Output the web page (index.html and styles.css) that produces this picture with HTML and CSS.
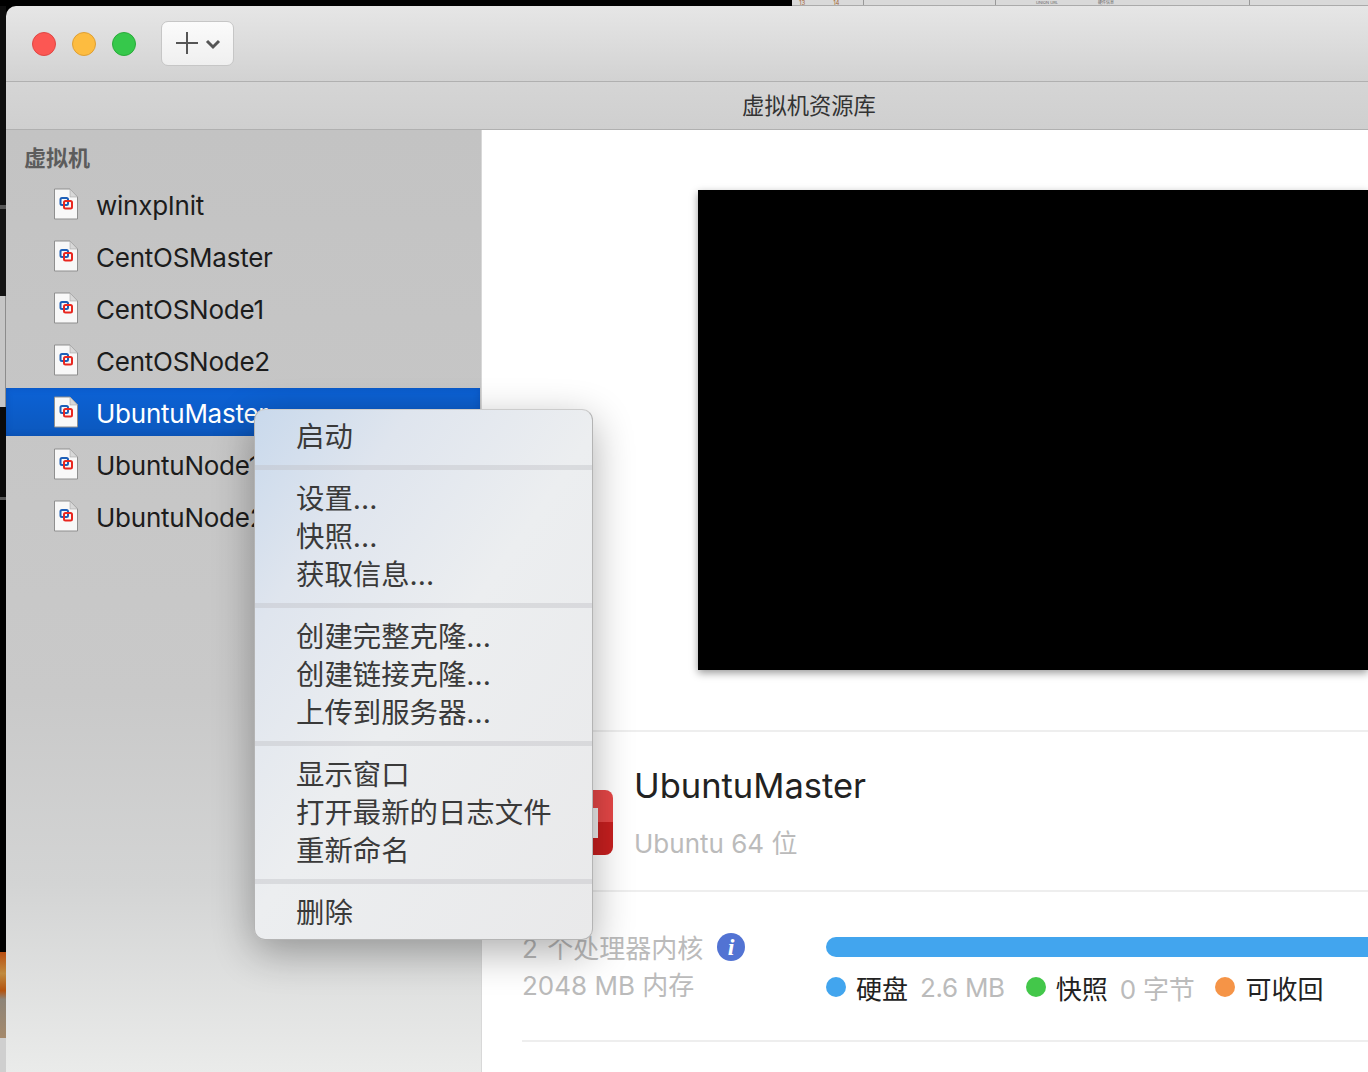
FILE: index.html
```html
<!DOCTYPE html>
<html lang="zh-CN">
<head>
    <meta charset="UTF-8">
    <title>虚拟机资源库</title>
    <link rel="stylesheet" href="styles.css">
</head>
<body>
    <div class="desktop-top">
        <div class="sheet">
            <span class="sheet-cell sheet-nums"><span>13</span><span>14</span></span>
            <span class="sheet-cell sheet-b"></span>
            <span class="sheet-cell sheet-c"><span class="sheet-label">UNION URL</span><span class="sheet-label">硬件信息</span></span>
            <span class="sheet-cell sheet-d"></span>
        </div>
    </div>
    <div class="desktop">
        <div class="desktop-left">
            <div class="strip strip-a"></div>
            <div class="strip strip-bar"></div>
            <div class="strip strip-b"></div>
            <div class="strip strip-light"></div>
            <div class="strip strip-c"></div>
            <div class="strip strip-bar-thin"></div>
            <div class="strip strip-d"></div>
            <div class="strip strip-photo"></div>
            <div class="strip strip-e"></div>
        </div>
        <div class="window">
            <header class="toolbar">
                <span class="light light-red"></span>
                <span class="light light-yellow"></span>
                <span class="light light-green"></span>
                <button class="add-btn">
                    <svg width="56" height="26" viewBox="0 0 56 26">
                        <path d="M13 1v22M2 12h22" fill="none" stroke="#555" stroke-width="2"/>
                        <path d="M33 10l6 6 6-6" fill="none" stroke="#555" stroke-width="3"/>
                    </svg>
                </button>
            </header>
            <div class="titlebar">虚拟机资源库</div>
            <div class="content">
                <aside class="sidebar">
                    <div class="side-title">虚拟机</div>
                    <ul class="vm-list">
                        <li class="vm"><svg class="doc" viewBox="0 0 26 32"><use href="#doc-icon"/></svg>winxpInit</li>
                        <li class="vm"><svg class="doc" viewBox="0 0 26 32"><use href="#doc-icon"/></svg>CentOSMaster</li>
                        <li class="vm"><svg class="doc" viewBox="0 0 26 32"><use href="#doc-icon"/></svg>CentOSNode1</li>
                        <li class="vm"><svg class="doc" viewBox="0 0 26 32"><use href="#doc-icon"/></svg>CentOSNode2</li>
                        <li class="vm vm-selected"><svg class="doc" viewBox="0 0 26 32"><use href="#doc-icon"/></svg>UbuntuMaster</li>
                        <li class="vm"><svg class="doc" viewBox="0 0 26 32"><use href="#doc-icon"/></svg>UbuntuNode1</li>
                        <li class="vm"><svg class="doc" viewBox="0 0 26 32"><use href="#doc-icon"/></svg>UbuntuNode2</li>
                    </ul>
                </aside>
                <main class="detail">
                    <div class="preview"><div class="screen"></div></div>
                    <section class="info">
                        <div class="os-icon"><span class="os-window"></span></div>
                        <div>
                            <div class="vm-name">UbuntuMaster</div>
                            <div class="vm-os">Ubuntu 64 位</div>
                        </div>
                    </section>
                    <section class="stats">
                        <div class="specs">
                            <div class="spec-line spec-cores">2 个处理器内核 <span class="info-dot">i</span></div>
                            <div class="spec-line">2048 MB 内存</div>
                        </div>
                        <div class="usage">
                            <div class="bar"></div>
                            <div class="legend">
                                <span class="dot dot-blue"></span><span class="key">硬盘</span><span class="val">2.6 MB</span>
                                <span class="dot dot-green"></span><span class="key">快照</span><span class="val">0 字节</span>
                                <span class="dot dot-orange"></span><span class="key">可收回</span>
                            </div>
                        </div>
                    </section>
                </main>
            </div>
        </div>
    </div>

    <div class="menu">
        <div class="menu-group"><div class="menu-item">启动</div></div>
        <div class="menu-group">
            <div class="menu-item">设置...</div>
            <div class="menu-item">快照...</div>
            <div class="menu-item">获取信息...</div>
        </div>
        <div class="menu-group">
            <div class="menu-item">创建完整克隆...</div>
            <div class="menu-item">创建链接克隆...</div>
            <div class="menu-item">上传到服务器...</div>
        </div>
        <div class="menu-group">
            <div class="menu-item">显示窗口</div>
            <div class="menu-item">打开最新的日志文件</div>
            <div class="menu-item">重新命名</div>
        </div>
        <div class="menu-group"><div class="menu-item">删除</div></div>
    </div>

    <svg class="defs" width="0" height="0">
        <symbol id="doc-icon" viewBox="0 0 26 32">
            <path d="M1.500 1h15.500l7.500 8v22h-23z" fill="#f8f8f8" stroke="#8f8f8f"/>
            <path d="M17 1v8h7.500z" fill="#d8d8d8" stroke="#aaa" stroke-width=".6"/>
            <rect x="7.500" y="10" width="7.500" height="7" rx="1.500" fill="none" stroke="#1d5fb8" stroke-width="2"/>
            <rect x="11" y="13" width="8" height="7.500" rx="1.500" fill="none" stroke="#e8261f" stroke-width="2"/>
        </symbol>
    </svg>
</body>
</html>
```

FILE: styles.css
```css
* {
    box-sizing: border-box;
}

html, body {
    margin: 0;
    height: 1072px;
    overflow: hidden;
}

body {
    position: relative;
    background-color: #000;
    font-family: Inter, "Noto Sans CJK SC", sans-serif;
    color: #222;
}

.defs {
    position: absolute;
}

/* bits of the desktop showing around the window */
.desktop-top {
    height: 6px;
    display: flex;
    justify-content: flex-end;
}

.sheet {
    width: 576px;
    display: flex;
    background-color: #d9d9d9;
    border-bottom: 1px solid #aaa;
}

.sheet-cell {
    display: flex;
    border-right: 1px solid #999;
}

.sheet-nums {
    width: 72px;
    gap: 28px;
    padding-left: 7px;
    font-size: 6px;
    line-height: 5px;
    color: #a5683a;
}

.sheet-b { width: 132px; }
.sheet-c { width: 254px; }
.sheet-d { flex: 1; border-right: none; }

.sheet-label {
    font-size: 4px;
    line-height: 5px;
    color: #666;
    margin-left: 40px;
    white-space: nowrap;
}

.desktop {
    display: flex;
    height: 1066px;
}

.desktop-left {
    width: 6px;
    flex-shrink: 0;
    display: flex;
    flex-direction: column;
}

.strip-a { height: 199px; background-color: #0e0e0e; }
.strip-bar { height: 4px; background-color: #555; }
.strip-b { height: 87px; background-color: #141414; }
.strip-light { height: 111px; background-color: #c6c6c6; border-right: 1px solid #8c8c8c; }
.strip-c { height: 90px; background-color: #0a0a0a; }
.strip-bar-thin { height: 3px; background-color: #555; }
.strip-d { height: 452px; background-color: #000; }
.strip-photo {
    height: 86px;
    background: linear-gradient(#b84e12 0, #c08a3e 25%, #b3530f 45%, #8d8478 55%, #a58a6c 100%);
}
.strip-e { height: 34px; background-color: #cfcfcf; }

.window {
    flex: 1;
    min-width: 0;
    border-top-left-radius: 10px;
    overflow: hidden;
    display: flex;
    flex-direction: column;
}

.toolbar {
    height: 76px;
    flex-shrink: 0;
    display: flex;
    align-items: center;
    padding: 0 0 0 26px;
    gap: 16px;
    background: linear-gradient(#e6e6e6, #d2d2d2);
    border-bottom: 1px solid #b0b0b0;
}

.light {
    width: 24px;
    height: 24px;
    border-radius: 50%;
}

.light-red { background-color: #fc5753; border: 1px solid #df4744; }
.light-yellow { background-color: #fdbc40; border: 1px solid #de9f34; }
.light-green { background-color: #36c84b; border: 1px solid #2aab3a; }

.add-btn {
    width: 73px;
    height: 45px;
    margin-left: 9px;
    padding: 0 0 0 12px;
    display: flex;
    align-items: center;
    background: linear-gradient(#fbfbfb, #efefef);
    border: 1px solid #c6c6c6;
    border-radius: 7px;
}

.titlebar {
    height: 48px;
    flex-shrink: 0;
    display: flex;
    align-items: center;
    justify-content: center;
    padding: 0 0 4px 244px;
    font-size: 22.300px;
    color: #333;
    background: linear-gradient(#d5d5d5, #cfcfcf);
    border-bottom: 1px solid #b0b0b0;
}

.content {
    flex: 1;
    display: flex;
    min-height: 0;
}

.sidebar {
    width: 476px;
    flex-shrink: 0;
    border-right: 1px solid #d8d8d8;
    background: linear-gradient(#c3c3c3 0, #c9c9c9 60%, #d3d4d4 80%, #eaebea 100%);
}

.side-title {
    padding: 15px 0 0 18px;
    height: 50px;
    font-size: 22px;
    line-height: 26px;
    font-weight: 700;
    color: #5c5c5c;
}

.vm-list {
    list-style: none;
    margin: 0;
    padding: 0;
}

.vm {
    height: 52px;
    display: flex;
    align-items: center;
    padding: 0 0 2px 47px;
    font-size: 26px;
    letter-spacing: -0.25px;
    color: #1c1c1c;
}

.vm-selected {
    height: 48px;
    margin: 0 1px 4px 0;
    padding: 2px 0 0 47px;
    color: #fff;
    background: linear-gradient(#0c62d6, #0c58bd);
    box-shadow: inset 0 0 6px rgba(0, 40, 120, 0.25);
}

.doc {
    width: 26px;
    height: 32px;
    margin-right: 17px;
    margin-top: -2px;
}

.detail {
    flex: 1;
    min-width: 0;
    background-color: #fff;
}

.preview {
    height: 602px;
    padding: 60px 0 0 216px;
    border-bottom: 2px solid #eee;
}

.screen {
    height: 480px;
    background-color: #000;
    box-shadow: 0 3px 8px rgba(0, 0, 0, 0.4);
}

.info {
    height: 160px;
    margin-left: 40px;
    display: flex;
    padding-top: 32px;
    border-bottom: 2px solid #eee;
}

.os-icon {
    width: 65px;
    height: 65px;
    margin: 26px 22px 0 26px;
    flex-shrink: 0;
    border-radius: 8px;
    background: linear-gradient(#e64747 50%, #c71f1f 50%);
    display: flex;
    align-items: center;
    justify-content: center;
}

.os-window {
    width: 34px;
    height: 30px;
    background-color: #eee;
}

.vm-name {
    font-size: 34.500px;
    line-height: 44px;
    margin-left: -1px;
    color: #222;
}

.vm-os {
    margin: 20px 0 0 -1px;
    font-size: 26px;
    line-height: 32px;
    color: #bbb;
}

.stats {
    height: 150px;
    margin-left: 40px;
    padding-top: 36px;
    display: flex;
    border-bottom: 2px solid #eee;
}

.specs {
    width: 304px;
    flex-shrink: 0;
}

.spec-line {
    display: flex;
    align-items: center;
    gap: 14px;
    height: 37px;
    font-size: 26px;
    color: #bbb;
}

.spec-cores {
    word-spacing: 2px;
}

.info-dot {
    width: 28px;
    height: 28px;
    border-radius: 50%;
    background-color: #5273d3;
    color: #fff;
    text-align: center;
    font-family: "Liberation Serif", serif;
    font-style: italic;
    font-weight: 700;
    font-size: 24px;
    line-height: 28px;
}

.usage {
    flex: 1;
    min-width: 0;
}

.bar {
    height: 20px;
    margin-top: 9px;
    border-radius: 10px 0 0 10px;
    background-color: #42a5ee;
}

.legend {
    display: flex;
    align-items: center;
    margin-top: 12px;
    font-size: 26px;
}

.dot {
    width: 20px;
    height: 20px;
    border-radius: 50%;
    margin-right: 10px;
    margin-top: -2px;
}

.dot-blue { background-color: #42a5ee; }
.dot-green { background-color: #43c74a; }
.dot-orange { background-color: #f59447; }

.key {
    color: #222;
    margin-right: 12px;
}

.val {
    color: #bbb;
    letter-spacing: -0.3px;
    margin-right: 21px;
}

.menu {
    position: absolute;
    left: 254px;
    top: 409px;
    width: 339px;
    height: 531px;
    border-radius: 11px;
    border: 1px solid #b4b4b4;
    border-top-color: #ccc;
    background: linear-gradient(125deg, #c9d9ec 0, #dfe5ee 22%, #eceef0 50%, #e9e9ea 100%);
    box-shadow: 0 12px 40px rgba(0, 0, 0, 0.32);
    color: #3a3a3a;
    overflow: hidden;
}

.menu-group {
    padding: 10px 0 9px;
    border-bottom: 5px solid rgba(190, 190, 195, 0.4);
}

.menu-group:first-child {
    padding-top: 8px;
}

.menu-group:last-child {
    border-bottom: none;
}

.menu-item {
    height: 38px;
    padding-left: 41px;
    font-size: 28.400px;
    line-height: 38px;
}
```
